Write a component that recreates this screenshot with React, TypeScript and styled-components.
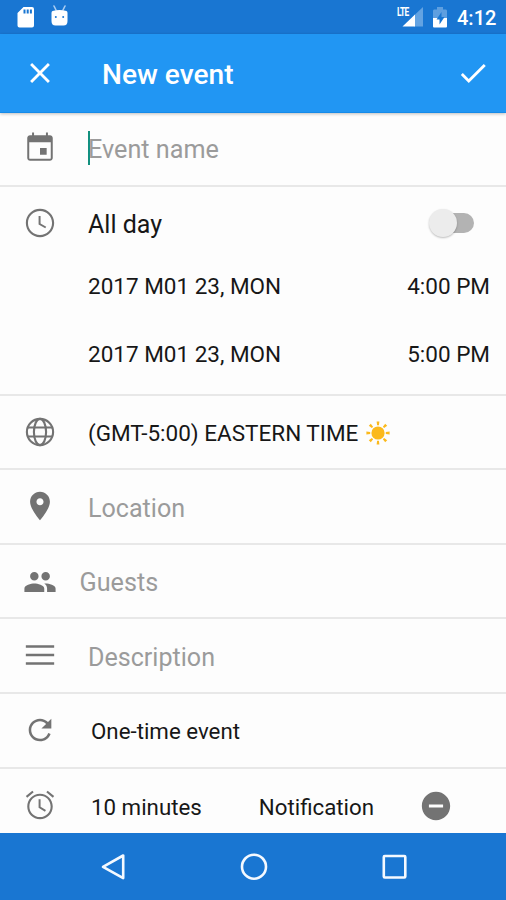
import React from "react";
import styled, { createGlobalStyle } from "styled-components";

const GlobalStyle = createGlobalStyle`
  *, *::before, *::after { box-sizing: border-box; }
  body { margin: 0; background: #fdfdfd; }
`;

const Screen = styled.div`
  width: 506px;
  height: 900px;
  display: flex;
  flex-direction: column;
  overflow: hidden;
  background: #fdfdfd;
  color: #171717;
  font-family: Roboto, "Liberation Sans", sans-serif;
`;

const StatusBar = styled.header`
  height: 34px;
  flex: none;
  display: flex;
  align-items: flex-start;
  padding: 0 11px 0 17px;
  background: #1976d2;
  color: #fff;
`;

const StatusIcon = styled.svg<{ $top: number; $gap: number }>`
  flex: none;
  margin-top: ${(p) => p.$top}px;
  margin-right: ${(p) => p.$gap}px;
`;

const Signal = styled.div`
  position: relative;
  width: 27px;
  height: 27px;
  margin: 0 10px 0 auto;
`;

const SignalShape = styled.svg`
  position: absolute;
  right: 0;
  bottom: 0;
`;

const NetworkType = styled.span`
  position: absolute;
  left: 1px;
  top: 7px;
  font-size: 12px;
  line-height: 10px;
  font-weight: 700;
  letter-spacing: -1px;
  transform: scaleX(0.7);
  transform-origin: left;
`;

const Clock = styled.span`
  margin-top: 3px;
  width: 38px;
  font-size: 20px;
  line-height: 30px;
  font-weight: 500;
  white-space: nowrap;
`;

const AppBar = styled.div`
  height: 79px;
  flex: none;
  display: flex;
  align-items: center;
  padding: 0 16px 0 23px;
  background: #2196f3;
  border-bottom: 1px solid #168be9;
  color: #fff;
  box-shadow: 0 1px 3px rgba(0, 0, 0, 0.25);
  z-index: 1;
`;

const Title = styled.h1`
  flex: 1;
  margin: 3px 0 0 45px;
  font-size: 28.1px;
  line-height: 32px;
  font-weight: 500;
`;

const Form = styled.main`
  flex: 1;
  min-height: 0;
  overflow: hidden;
`;

const Row = styled.section<{ $height: number }>`
  height: ${(p) => p.$height}px;
  display: flex;
  align-items: flex-start;
  border-bottom: 2px solid #e8e8e8;
`;

const IconSlot = styled.div<{ $top: number; $left?: number }>`
  width: 34px;
  height: 34px;
  flex: none;
  margin: ${(p) => p.$top}px 0 0 ${(p) => p.$left ?? 23}px;
  color: #737373;
`;

const Text = styled.span<{ $top?: number; $left?: number; $size?: number; $hint?: boolean }>`
  margin-top: ${(p) => p.$top ?? 0}px;
  margin-left: ${(p) => p.$left ?? 0}px;
  font-size: ${(p) => p.$size ?? 22.5}px;
  line-height: 30px;
  color: ${(p) => (p.$hint ? "#9b9b9b" : "#171717")};
  white-space: nowrap;
`;

const Caret = styled.i`
  width: 2px;
  height: 34px;
  margin: 18px -2px 0 31px;
  background: #12907e;
`;

const Schedule = styled.div`
  flex: 1;
  display: flex;
  flex-direction: column;
  padding: 22px 16px 0 31px;
`;

const Line = styled.div<{ $gap?: number }>`
  display: flex;
  justify-content: space-between;
  margin-top: ${(p) => p.$gap ?? 0}px;
  height: 30px;
`;

const Switch = styled.div`
  position: relative;
  width: 40px;
  height: 20px;
  margin: 4px 16px 0 0;
  border-radius: 10px;
  background: #b3b3b3;
`;

const Thumb = styled.div`
  position: absolute;
  left: -5px;
  top: -4px;
  width: 28px;
  height: 28px;
  border-radius: 50%;
  background: #ececec;
  box-shadow: 0 1px 2px rgba(0, 0, 0, 0.25);
`;

const Sun = styled.svg`
  margin: 25px 0 0 7.500px;
`;

const NavBar = styled.nav`
  height: 67px;
  flex: none;
  display: flex;
  justify-content: space-between;
  padding: 18px 96px 0 97px;
  background: #1976d2;
`;

const paths = {
  close: "M19 6.41 17.59 5 12 10.59 6.41 5 5 6.41 10.59 12 5 17.59 6.41 19 12 13.41 17.59 19 19 17.59 13.41 12z",
  check: "M9 16.17 4.83 12l-1.42 1.41L9 19 21 7l-1.41-1.41z",
  event: "M12 12v4.700h4.700V12zM16.200 1v2H7.800V1H6.400v2H5c-1.110 0-2 .9-2 2v14c0 1.100.89 2 2 2h14c1.100 0 2-.9 2-2V5c0-1.100-.9-2-2-2h-1.400V1zM19.600 19q0 .6-.6.6H5q-.6 0-.6-.6V7.900h15.200z",
  schedule: "M11.99 2C6.47 2 2 6.48 2 12s4.470 10 9.990 10C17.520 22 22 17.520 22 12S17.520 2 11.990 2zM12 20.500c-4.700 0-8.500-3.800-8.500-8.500S7.300 3.500 12 3.500s8.500 3.800 8.500 8.500-3.800 8.500-8.500 8.500zM12.400 7H11v6l4.700 2.700.7-1.100-4-2.300z",
  place: "M12 2C8.130 2 5 5.130 5 9c0 5.250 7 13 7 13s7-7.750 7-13c0-3.870-3.130-7-7-7zm0 9.500c-1.380 0-2.500-1.120-2.500-2.500s1.120-2.500 2.500-2.500 2.500 1.120 2.500 2.500-1.120 2.500-2.500 2.500z",
  people: "M16 11c1.660 0 2.990-1.340 2.990-3S17.660 5 16 5c-1.660 0-3 1.340-3 3s1.340 3 3 3zm-8 0c1.660 0 2.990-1.340 2.990-3S9.660 5 8 5C6.340 5 5 6.340 5 8s1.340 3 3 3zm0 2c-2.330 0-7 1.170-7 3.500V19h14v-2.500c0-2.330-4.670-3.500-7-3.500zm8 0c-.29 0-.62.02-.97.05 1.160.84 1.970 1.970 1.970 3.450V19h6v-2.500c0-2.330-4.670-3.500-7-3.500z",
  notes: "M2 5.100h20v1.700H2zM2 11.150h20v1.700H2zM2 17.200h20v1.700H2z",
  refresh: "M17.650 6.350C16.200 4.900 14.210 4 12 4c-4.420 0-7.990 3.580-7.990 8s3.570 8 7.990 8c3.500 0 6.400-2.100 7.500-5.200l-1.700-.7C16.900 16.600 14.700 18.200 12 18.200c-3.420 0-6.200-2.780-6.200-6.200S8.580 5.800 12 5.800c1.700 0 3.200.7 4.300 1.900L13 11h7V4l-2.350 2.350z",
  alarm: "M22 5.720l-4.600-3.860-.95 1.150 4.600 3.860.95-1.150zM7.550 3.010 6.600 1.860 2 5.710l.95 1.150 4.600-3.850zM12.400 8H11v6l4.500 2.700.7-1.150-3.800-2.250V8zM12 4c-4.970 0-9 4.030-9 9s4.020 9 9 9c4.970 0 9-4.030 9-9s-4.030-9-9-9zm0 16.500c-4.150 0-7.500-3.350-7.500-7.500S7.850 5.500 12 5.500s7.500 3.350 7.500 7.500-3.350 7.500-7.500 7.500z",
  remove: "M12 2C6.480 2 2 6.480 2 12s4.480 10 10 10 10-4.480 10-10S17.520 2 12 2zm5 11H7v-2h10v2z",
};

function Icon({ name }: { name: keyof typeof paths }) {
  return (
    <svg width="34" height="34" viewBox="0 0 24 24" fill="currentColor" display="block">
      <path d={paths[name]} />
    </svg>
  );
}

function GlobeIcon() {
  return (
    <svg width="34" height="34" viewBox="0 0 24 24" fill="none" stroke="currentColor" strokeWidth="1.500" display="block">
      <circle cx="12" cy="12" r="9.250" />
      <ellipse cx="12" cy="12" rx="4.300" ry="9.250" />
      <path d="M3.500 8.800h17M3.500 15.200h17" />
    </svg>
  );
}

const rays = [0, 45, 90, 135, 180, 225, 270, 315];

export default function App() {
  return (
    <Screen>
      <GlobalStyle />
      <StatusBar>
        <StatusIcon $top={7} $gap={17} width="17" height="21" viewBox="0 0 17 21">
          <path
            fill="#fff"
            fillRule="evenodd"
            d="M6.500 0H15a2 2 0 0 1 2 2v16.500a2 2 0 0 1-2 2H2.500a2 2 0 0 1-2-2V6zM6.500 2.500v4h2v-4zM9.700 2.500v4h2v-4zM12.900 2.500v4h2v-4z"
          />
        </StatusIcon>
        <StatusIcon $top={5} $gap={0} width="17" height="21" viewBox="0 0 17 21">
          <path d="M3 1l2 4M14 1l-2 4" stroke="#a9cdf2" strokeWidth="1.600" strokeLinecap="round" />
          <path d="M1.500 6q7-2 14 0 1 .4 1 2v8q0 4.500-4 4.500h-8q-4 0-4-4.500V8q0-1.600 1-2z" fill="#fff" />
          <circle cx="4.800" cy="12" r="1" fill="#1976d2" />
          <circle cx="12.200" cy="12" r="1" fill="#1976d2" />
        </StatusIcon>
        <Signal>
          <SignalShape width="21" height="20" viewBox="0 0 21 20">
            <path d="M21 0v19.500H12V8.500z" fill="#63a3e2" />
            <path d="M13 7.500v12H0.500z" fill="#fff" />
          </SignalShape>
          <NetworkType>LTE</NetworkType>
        </Signal>
        <StatusIcon $top={7} $gap={10} width="14" height="21" viewBox="0 0 14 21">
          <path d="M4 0h6v2.500h3Q14 2.500 14 4v7H0V4q0-1.500 1-1.500h3z" fill="#5e9fe0" />
          <path d="M0 11h14v8.500q0 1-1 1H1q-1 0-1-1z" fill="#fff" />
          <path d="M8.500 5 3.500 12.500h3v5l5-7.500h-3z" fill="#1976d2" />
        </StatusIcon>
        <Clock>4:12</Clock>
      </StatusBar>

      <AppBar>
        <Icon name="close" />
        <Title>New event</Title>
        <Icon name="check" />
      </AppBar>

      <Form>
        <Row $height={74}>
          <IconSlot $top={18}><Icon name="event" /></IconSlot>
          <Caret />
          <Text $top={22} $size={25.2} $hint>Event name</Text>
        </Row>
        <Row $height={209}>
          <IconSlot $top={19}><Icon name="schedule" /></IconSlot>
          <Schedule>
            <Line>
              <Text $top={1} $size={25}>All day</Text>
              <Switch><Thumb /></Switch>
            </Line>
            <Line $gap={32}>
              <Text>2017 M01 23, MON</Text>
              <Text>4:00 PM</Text>
            </Line>
            <Line $gap={38}>
              <Text>2017 M01 23, MON</Text>
              <Text>5:00 PM</Text>
            </Line>
          </Schedule>
        </Row>
        <Row $height={74}>
          <IconSlot $top={19}><GlobeIcon /></IconSlot>
          <Text $top={22} $left={31}>(GMT-5:00) EASTERN TIME</Text>
          <Sun width="24" height="24" viewBox="-12 -12 24 24" fill="#fbb91c">
            <circle r="6.600" />
            {rays.map((angle) => (
              <path key={angle} d="M-1.400-11.600h2.800L.9-7.800h-1.800z" transform={`rotate(${angle})`} />
            ))}
          </Sun>
        </Row>
        <Row $height={75}>
          <IconSlot $top={19}><Icon name="place" /></IconSlot>
          <Text $top={24} $left={31} $size={25.1} $hint>Location</Text>
        </Row>
        <Row $height={74}>
          <IconSlot $top={20}><Icon name="people" /></IconSlot>
          <Text $top={23} $left={22.5} $size={25.2} $hint>Guests</Text>
        </Row>
        <Row $height={75}>
          <IconSlot $top={19}><Icon name="notes" /></IconSlot>
          <Text $top={24} $left={31} $size={25.1} $hint>Description</Text>
        </Row>
        <Row $height={75}>
          <IconSlot $top={19}><Icon name="refresh" /></IconSlot>
          <Text $top={22} $left={34} $size={22.3}>One-time event</Text>
        </Row>
        <Row $height={75}>
          <IconSlot $top={19}><Icon name="alarm" /></IconSlot>
          <Text $top={22.5} $left={34} $size={22.3}>10 minutes</Text>
          <Text $top={22.5} $left={57} $size={22.3}>Notification</Text>
          <IconSlot $top={20} $left={44.5}><Icon name="remove" /></IconSlot>
        </Row>
      </Form>

      <NavBar>
        <svg width="32" height="32" viewBox="0 0 32 32" fill="none" stroke="#f4f9ff" strokeWidth="2.600" strokeLinejoin="round">
          <path d="M6 15.800 26.200 4.500v22.600z" />
        </svg>
        <svg width="32" height="32" viewBox="0 0 32 32" fill="none" stroke="#f4f9ff" strokeWidth="2.600">
          <circle cx="16" cy="15.700" r="12" />
        </svg>
        <svg width="32" height="32" viewBox="0 0 32 32" fill="none" stroke="#f4f9ff" strokeWidth="2.600">
          <rect x="5.800" y="5" width="21.500" height="21.500" rx="1" />
        </svg>
      </NavBar>
    </Screen>
  );
}
